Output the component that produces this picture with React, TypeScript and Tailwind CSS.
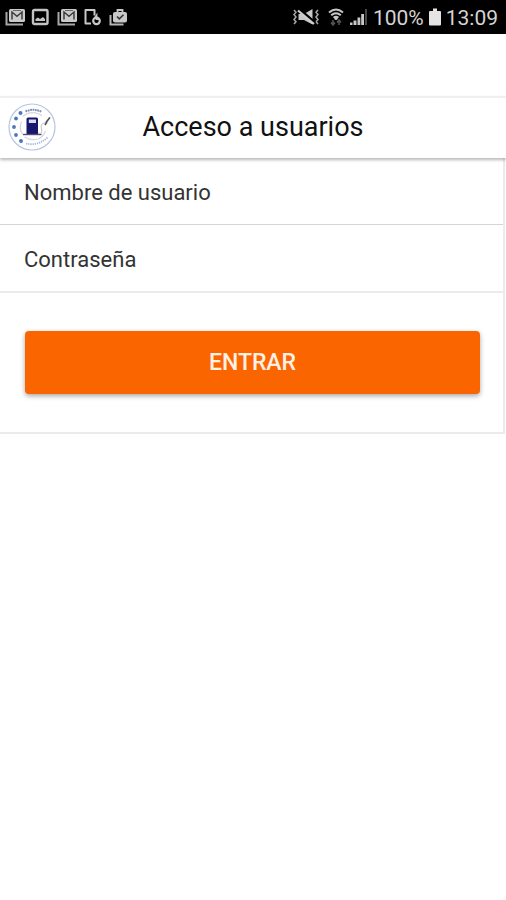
const MailIcon = () => (
    <svg className="h-[18px] w-5" viewBox="0 0 20 18" fill="none" aria-hidden="true">
        <path d="M1.5 4v12.500h16.500" stroke="#a8a8a8" strokeWidth="2" />
        <rect x="4" y="1" width="16" height="13" rx="1.500" fill="#cacaca" />
        <path d="M7 11.500V4l5 4.200L17 4v7.500" stroke="#3c3c3c" strokeWidth="1.500" />
        <path d="M8 2.500h8" stroke="#6a6a6a" strokeWidth="1" />
    </svg>
);

const PictureIcon = () => (
    <svg className="h-[18px] w-5" viewBox="0 0 20 18" fill="none" aria-hidden="true">
        <rect x="2" y="2" width="14.500" height="14" rx="1.500" stroke="#c4c4c4" strokeWidth="2.400" />
        <path d="M4.500 13v-2l2.500-1.500 2 1.500 3-2 2 2v2z" fill="#c4c4c4" />
    </svg>
);

const PhoneSyncIcon = () => (
    <svg className="h-[18px] w-5" viewBox="0 0 20 18" fill="none" aria-hidden="true">
        <path d="M8 15.500H2.500V2h9v5.500" stroke="#c8c8c8" strokeWidth="2" strokeLinejoin="round" />
        <circle cx="13.500" cy="12.800" r="3.300" stroke="#c8c8c8" strokeWidth="2.200" />
        <path d="M11.500 10.500l2-3v3.500H16" stroke="#c8c8c8" strokeWidth="1.800" />
    </svg>
);

const BagIcon = () => (
    <svg className="h-[18px] w-5" viewBox="0 0 20 18" fill="none" aria-hidden="true">
        <path d="M1.500 7v9.500h13" stroke="#b5b5b5" strokeWidth="2" />
        <path d="M8.500 4V2h5v2" stroke="#c8c8c8" strokeWidth="1.800" />
        <rect x="4" y="4" width="14" height="10.500" rx="2" fill="#c8c8c8" />
        <path d="M8 8.500l2.300 2.300 4.200-4.100" stroke="#333" strokeWidth="1.600" />
    </svg>
);

const MuteIcon = () => (
    <svg className="h-[18px] w-[26px]" viewBox="0 0 26 18" fill="none" aria-hidden="true">
        <path d="M1 2l2 2.300L1 6.600 3 9l-2 2.400 2 2.300L1 16M25 2l-2 2.300 2 2.300L23 9l2 2.400-2 2.300 2 2.300" stroke="#a8a8a8" strokeWidth="1.500" />
        <path d="M5.500 6H11l8.500-5v15.500L11 12H5.500z" fill="#c8c8c8" />
        <path d="M7 2l15 13" stroke="#000" strokeWidth="3" />
        <path d="M5 2.500l16 13.500" stroke="#d0d0d0" strokeWidth="2.200" />
    </svg>
);

const WifiIcon = () => (
    <svg className="h-[18px] w-4" viewBox="0 0 16 18" fill="none" aria-hidden="true">
        <path d="M1 4.500q7-6 14 0M3.200 7.300q4.800-4.200 9.600 0M5.600 9.700q2.400-2 4.800 0" stroke="#c8c8c8" strokeWidth="2" />
        <circle cx="8" cy="10.500" r="1.600" fill="#c8c8c8" />
        <path d="M5 12v5M3 14.500L5 17l2-2.500M11 17v-5M9 14.500l2-2.500 2 2.500" stroke="#565656" strokeWidth="1.500" />
    </svg>
);

const SignalIcon = () => (
    <svg className="h-[18px] w-[19px]" viewBox="0 0 19 18" aria-hidden="true">
        <path d="M1 14.500h2.500V17H1zM4.500 12.500h3V17h-3zM8.500 9.500h2.800V17H8.500zM12.200 6H15v11h-2.800z" fill="#c8c8c8" />
        <path d="M16 1h2v16h-2z" fill="#464646" />
    </svg>
);

const BatteryIcon = () => (
    <svg className="h-[18px] w-3" viewBox="0 0 12 18" aria-hidden="true">
        <path d="M4 .5h4V3h3q1 0 1 1v12.500q0 1-1 1H1q-1 0-1-1V4q0-1 1-1h3z" fill="#e4e4e4" />
    </svg>
);

const Logo = () => (
    <svg className="h-12 w-12 shrink-0" viewBox="0 0 48 48" fill="none" role="img" aria-label="Logo">
        <circle cx="24" cy="24" r="23" stroke="#b9c4e2" strokeWidth="1.200" />
        <path d="M15 13.500a14 14 0 0 1 19-.5M14.500 31.500a14 14 0 0 1-1-13M37.500 28a14 14 0 0 1-7 8q-8 2-14-2" stroke="#d5d6e4" strokeWidth="1.200" />
        <path d="M17.500 8.500q8-3.500 16 .3" stroke="#7f8fb9" strokeWidth="2" strokeDasharray="1.800 .6" />
        <path d="M18 40.500q11 3 21.500-6" stroke="#a9b8dc" strokeWidth="1.800" strokeDasharray="1.300 .9" />
        <g fill="#4a79bb">
            <circle cx="12.500" cy="10" r="2" />
            <circle cx="8" cy="15.500" r="1.900" />
            <circle cx="6" cy="24" r="1.900" />
            <circle cx="8" cy="32" r="1.900" />
            <circle cx="13" cy="38" r="2" />
        </g>
        <path d="M18.500 16q0-1.500 1.500-1.500h8.500q1.500 0 1.500 1.500v15.500H18.500z" fill="#17176e" />
        <path d="M20.800 16.500h7.200v3.500h-7.200z" fill="#d9dbea" />
        <path d="M15 31.500h18.500" stroke="#55506a" strokeWidth="1.400" />
        <path d="M30 30q5 2 3.500-4T37 20l4.500-6" stroke="#c5bec8" strokeWidth="1" />
        <path d="M38 19.500l4-5M37 22l2-3" stroke="#4b4650" strokeWidth="1.400" />
    </svg>
);

const StatusBar = () => {
    return (
        <div className="flex h-[34px] items-center justify-between bg-black pl-[5px] pr-2 text-[21px] leading-none text-[#d4d4d4]">
            <div className="flex items-center gap-[6px]">
                <MailIcon />
                <PictureIcon />
                <MailIcon />
                <PhoneSyncIcon />
                <BagIcon />
            </div>
            <div className="flex items-center gap-[5px]">
                <MuteIcon />
                <div className="flex items-center gap-[5px] pl-1">
                    <WifiIcon />
                    <SignalIcon />
                </div>
                <span className="pt-[3px]">100%</span>
                <BatteryIcon />
                <span className="pt-[3px]">13:09</span>
            </div>
        </div>
    );
};

const App = () => {
    return (
        <div className="min-h-screen bg-white font-[Roboto,sans-serif]">
            <StatusBar />
            <header className="relative mt-[62px] grid h-[62px] grid-cols-[48px_1fr_48px] items-center border-t-2 border-[#f0f0f0] bg-white px-2 pb-[2px] shadow-[0_2px_3px_rgba(0,0,0,0.28)]">
                <Logo />
                <h1 className="text-center text-[27px] leading-8 text-[#111]">Acceso a usuarios</h1>
            </header>
            <form className="mr-px border-b-2 border-r-2 border-[#ebebeb]" onSubmit={(e) => e.preventDefault()}>
                <div className="flex h-[67px] items-center gap-4 border-b border-[#d4d4d4] px-6 pt-[2px] text-[22px] text-[#333]">
                    <label htmlFor="usuario">Nombre de usuario</label>
                    <input id="usuario" type="text" className="min-w-0 flex-1 bg-transparent outline-none" />
                </div>
                <div className="flex h-[68px] items-center gap-4 border-b-2 border-[#ebebeb] px-6 pt-[2px] text-[22px] text-[#333]">
                    <label htmlFor="clave">Contraseña</label>
                    <input id="clave" type="password" className="min-w-0 flex-1 bg-transparent outline-none" />
                </div>
                <div className="py-[38px] pl-[25px] pr-[23px]">
                    <button
                        type="submit"
                        className="h-[63px] w-full rounded bg-[#fb6500] pt-[2px] text-[23px] font-medium text-[#fff0e6] shadow-[0_2px_5px_rgba(0,0,0,0.35)]"
                    >
                        ENTRAR
                    </button>
                </div>
            </form>
        </div>
    );
};

export default App;
